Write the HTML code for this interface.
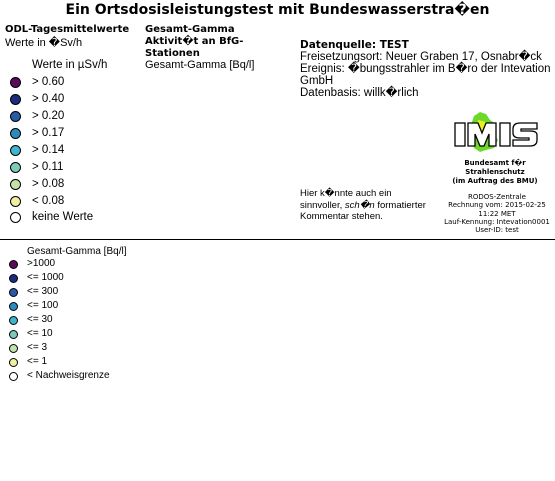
<!DOCTYPE html>
<html><head><meta charset="utf-8"><style>
body{margin:0;width:555px;height:481px;background:#fff;position:relative;overflow:hidden;font-family:"DejaVu Sans","Liberation Sans",sans-serif;color:#000}
.a{position:absolute;white-space:nowrap}
.t{left:0;width:555px;text-align:center;top:2px;font-weight:bold;font-size:14px}
.b{font-weight:bold;font-size:10px}
.n{font-size:11px}
.c{position:absolute;border:1px solid #000;border-radius:50%}
.l1 .c{width:9px;height:9px;left:10px}
.l2 .c{width:7px;height:7px;left:9px}
.s{font-family:"Liberation Sans",sans-serif;font-size:10px}
</style></head><body>
<div class="a t">Ein Ortsdosisleistungstest mit Bundeswasserstra�en</div>
<div class="a b" style="left:5px;top:24px">ODL-Tagesmittelwerte</div>
<div class="a n" style="left:5px;top:36px;font-family:'Liberation Sans',sans-serif">Werte in �Sv/h</div>
<div class="a b" style="left:145px;top:24px;line-height:12px">Gesamt-Gamma<br>Aktivit�t an BfG-<br>Stationen</div>
<div class="a n" style="left:145px;top:59px;font-family:'Liberation Sans',sans-serif">Gesamt-Gamma [Bq/l]</div>
<div class="l1" style="font-family:'Liberation Sans',sans-serif;font-size:11.5px">
<div class="a" style="left:32px;top:59px">Werte in µSv/h</div>
<div class="c" style="top:77px;background:#5a0a5a"></div><div class="a" style="left:32px;top:76px">&gt; 0.60</div>
<div class="c" style="top:94px;background:#1a2d7c"></div><div class="a" style="left:32px;top:93px">&gt; 0.40</div>
<div class="c" style="top:111px;background:#2a5aa4"></div><div class="a" style="left:32px;top:110px">&gt; 0.20</div>
<div class="c" style="top:128px;background:#2a8cbc"></div><div class="a" style="left:32px;top:127px">&gt; 0.17</div>
<div class="c" style="top:145px;background:#40b4cc"></div><div class="a" style="left:32px;top:144px">&gt; 0.14</div>
<div class="c" style="top:162px;background:#7ccab8"></div><div class="a" style="left:32px;top:161px">&gt; 0.11</div>
<div class="c" style="top:179px;background:#c2e2aa"></div><div class="a" style="left:32px;top:178px">&gt; 0.08</div>
<div class="c" style="top:196px;background:#eef0a0"></div><div class="a" style="left:32px;top:195px">&lt; 0.08</div>
<div class="c" style="top:212px;background:#fff"></div><div class="a" style="left:32px;top:211px">keine Werte</div>
</div>
<div class="a" style="left:300px;top:39px;font-size:11.5px;line-height:12px;font-family:'Liberation Sans',sans-serif"><b style="font-family:'DejaVu Sans',sans-serif;font-size:10.5px">Datenquelle: TEST</b><br>Freisetzungsort: Neuer Graben 17, Osnabr�ck<br>Ereignis: �bungsstrahler im B�ro der Intevation<br>GmbH<br>Datenbasis: willk�rlich</div>
<svg class="a" style="left:450px;top:108px" width="92" height="48">
<path d="M24 8 L30 4 L36 6 L40 12 L46 16 L44 26 L48 32 L44 40 L36 42 L30 44 L24 40 L22 32 L20 24 L22 14Z" fill="#6cd82a"/>
<path d="M28 12 L36 14 L38 24 L32 30 L26 26Z" fill="#e8f020"/>
<g fill="#fff" stroke="#000" stroke-width="1.3">
<rect x="5" y="15" width="10" height="23"/>
<path d="M18 15 H28 L32 25 L36 15 H46 V38 H39 V26 L34 38 H30 L25 26 V38 H18Z"/>
<rect x="50" y="15" width="10" height="23"/>
<path d="M87 15 H70 Q63 15 63 21 V25 Q63 30 70 30 H79 V32 H63 V38 H80 Q87 38 87 32 V27 Q87 23 80 23 H71 V21 H87Z"/>
</g></svg>
<div class="a" style="left:440px;top:159px;width:110px;text-align:center;font-size:7px;font-weight:bold;line-height:9px">Bundesamt f�r<br>Strahlenschutz<br>(im Auftrag des BMU)</div>
<div class="a" style="left:300px;top:188px;font-size:9.5px;line-height:11.5px;font-family:'Liberation Sans',sans-serif">Hier k�nnte auch ein<br>sinnvoller, <i>sch�n</i> formatierter<br>Kommentar stehen.</div>
<div class="a" style="left:440px;top:193px;width:114px;text-align:center;font-size:7px;line-height:8.3px">RODOS-Zentrale<br>Rechnung vom: 2015-02-25<br>11:22 MET<br>Lauf-Kennung: Intevation0001<br>User-ID: test</div>
<div class="a" style="left:0;top:239px;width:555px;height:1px;background:#000"></div>
<div class="l2 s">
<div class="a" style="left:27px;top:246px">Gesamt-Gamma [Bq/l]</div>
<div class="c" style="top:260px;background:#5a0a5a"></div><div class="a" style="left:27px;top:258px">&gt;1000</div>
<div class="c" style="top:274px;background:#1a2d7c"></div><div class="a" style="left:27px;top:272px">&lt;= 1000</div>
<div class="c" style="top:288px;background:#2a5aa4"></div><div class="a" style="left:27px;top:286px">&lt;= 300</div>
<div class="c" style="top:302px;background:#2a8cbc"></div><div class="a" style="left:27px;top:300px">&lt;= 100</div>
<div class="c" style="top:316px;background:#40b4cc"></div><div class="a" style="left:27px;top:314px">&lt;= 30</div>
<div class="c" style="top:330px;background:#7ccab8"></div><div class="a" style="left:27px;top:328px">&lt;= 10</div>
<div class="c" style="top:344px;background:#c2e2aa"></div><div class="a" style="left:27px;top:342px">&lt;= 3</div>
<div class="c" style="top:358px;background:#eef0a0"></div><div class="a" style="left:27px;top:356px">&lt;= 1</div>
<div class="c" style="top:372px;background:#fff"></div><div class="a" style="left:27px;top:370px">&lt; Nachweisgrenze</div>
</div>
</body></html>
